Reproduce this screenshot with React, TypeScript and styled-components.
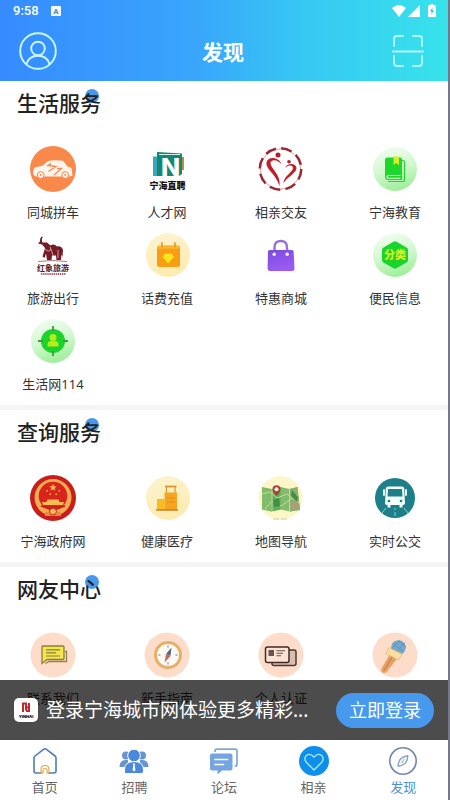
import React from "react";
import styled, { createGlobalStyle } from "styled-components";

const GlobalStyle = createGlobalStyle`
  *, *::before, *::after { box-sizing: border-box; }
  body {
    margin: 0;
    background: #fff;
    color: #333;
    font-family: "Noto Sans", "Noto Sans CJK SC", sans-serif;
  }
  a { color: inherit; text-decoration: none; }
  button { font: inherit; color: inherit; border: 0; padding: 0; background: none; cursor: pointer; }
  h1, h2, p { margin: 0; }
  svg { display: block; }
`;

const Screen = styled.div`
  display: flex;
  flex-direction: column;
  height: 100vh;
  border-right: 2px solid #77778a;
  background: #fff;
`;

const Header = styled.header`
  flex: none;
  background: linear-gradient(90deg, #368bff 0%, #39a7fb 45%, #37c5f4 65%, #37e3eb 100%);
  color: #fff;
`;

const StatusBar = styled.div`
  display: flex;
  align-items: center;
  justify-content: space-between;
  height: 21px;
  padding: 0 12px 0 13px;
  font: 500 13px/20px Roboto, sans-serif;
`;

const StatusGroup = styled.div<{ $gap: number }>`
  display: flex;
  align-items: center;
  gap: ${(p) => p.$gap}px;
`;

const TitleBar = styled.div`
  display: grid;
  grid-template-columns: 40px 1fr 40px;
  align-items: center;
  height: 60px;
  padding: 0 20px 0 18px;
`;

const PageTitle = styled.h1`
  font: 700 21px/30px "Noto Sans CJK SC", sans-serif;
  text-align: center;
`;

const IconButton = styled.button`
  display: grid;
  place-items: center;
  width: 40px;
  height: 40px;
`;

const Body = styled.div`
  position: relative;
  flex: 1;
  min-height: 0;
`;

const Scroller = styled.main`
  height: 100%;
  overflow-y: auto;
  scrollbar-width: none;
  padding-bottom: 60px;
`;

const Section = styled.section`
  padding: 0 16px 11px;
  & + & { border-top: 5px solid #f5f5f6; }
`;

const SectionHead = styled.div`
  height: 65px;
  padding: 6px 0 0 1px;
`;

const SectionTitle = styled.h2`
  position: relative;
  z-index: 0;
  width: max-content;
  font: 500 21px/30px "Noto Sans CJK SC", sans-serif;
  color: #222;
  &::after {
    content: "";
    position: absolute;
    z-index: -1;
    top: 2px;
    right: 2px;
    width: 14px;
    height: 14px;
    border-radius: 50%;
    background: #4a98ea;
  }
`;

const ServiceGrid = styled.div`
  display: grid;
  grid-template-columns: repeat(4, 74px);
  justify-content: space-between;
  row-gap: 10px;
`;

const ServiceLink = styled.a`
  display: flex;
  flex-direction: column;
  align-items: center;
  gap: 10px;
  font-size: 13px;
  line-height: 20px;
  white-space: nowrap;
`;

const LoginBar = styled.aside`
  position: absolute;
  left: 0;
  right: 0;
  bottom: 0;
  display: flex;
  align-items: center;
  height: 60px;
  padding: 0 14px;
  background: rgba(0, 0, 0, 0.7);
  color: #fff;
`;

const AppLogo = styled.span`
  flex: none;
  width: 24px;
  height: 24px;
  margin-right: 8px;
  border-radius: 5px;
  background: #fff;
`;

const LoginText = styled.p`
  flex: 1;
  min-width: 0;
  font-size: 19px;
  line-height: 28px;
  white-space: nowrap;
`;

const LoginButton = styled.button`
  flex: none;
  width: 98px;
  height: 35px;
  border-radius: 18px;
  background: #4799ed;
  font-size: 18px;
  line-height: 35px;
  color: #fff;
`;

const TabBar = styled.nav`
  flex: none;
  display: grid;
  grid-template-columns: repeat(5, 1fr);
  height: 60px;
  padding-top: 6px;
  background: #fff;
`;

const Tab = styled.a<{ $active?: boolean }>`
  display: flex;
  flex-direction: column;
  align-items: center;
  gap: 2px;
  font-size: 13px;
  line-height: 18px;
  color: ${(p) => (p.$active ? "#4a90cf" : "#666")};
`;

const cjk = '"Noto Sans CJK SC", sans-serif';

const Art = ({ children }: { children: React.ReactNode }) => (
  <svg width="46" height="46" viewBox="0 0 46 46" fill="none" aria-hidden="true">
    {children}
  </svg>
);

const TabArt = ({ children }: { children: React.ReactNode }) => (
  <svg width="30" height="30" viewBox="0 0 30 30" fill="none" aria-hidden="true">
    {children}
  </svg>
);

const GreenDisc = ({ id }: { id: string }) => (
  <>
    <defs>
      <linearGradient id={id} x1="0.3" y1="0" x2="0.6" y2="1">
        <stop offset="0" stopColor="#f1fdf0" />
        <stop offset="0.5" stopColor="#d3f8d0" />
        <stop offset="1" stopColor="#9cee98" />
      </linearGradient>
    </defs>
    <circle cx="23" cy="23" r="22" fill={`url(#${id})`} />
  </>
);

const YellowDisc = ({ id }: { id: string }) => (
  <>
    <defs>
      <linearGradient id={id} x1="0.2" y1="0" x2="0.5" y2="1">
        <stop offset="0" stopColor="#fdf3cf" />
        <stop offset="1" stopColor="#fdebb0" />
      </linearGradient>
    </defs>
    <circle cx="24" cy="23" r="22" fill={`url(#${id})`} />
  </>
);

const CarArt = () => (
  <Art>
    <circle cx="23" cy="23" r="23" fill="#f9894a" />
    <path d="M3 25.5 4.500 21.500 13 19.500 18 15Q24 13.800 33 14.800L37.500 20.500 41.500 22 42.500 29.500 39.500 30.500H6L3.500 29Z" fill="#fff5ec" />
    <path d="M17 20 21 17.500 18.500 19.500 26 20.500 18.500 25.500" stroke="#f9894a" strokeWidth="1.300" />
    <path d="M24 29 31.500 22.500H27" stroke="#f9894a" strokeWidth="1.300" />
    <circle cx="10.700" cy="29" r="3.400" fill="#fff5ec" stroke="#f9894a" strokeWidth="1" />
    <circle cx="35.200" cy="29" r="3.400" fill="#fff5ec" stroke="#f9894a" strokeWidth="1" />
    <circle cx="10.700" cy="29" r="1" fill="#f9894a" />
    <circle cx="35.200" cy="29" r="1" fill="#f9894a" />
  </Art>
);

const JobsArt = () => (
  <Art>
    <path d="M9 10.500H14V30H9Z" fill="#35a9bb" />
    <path d="M36 11H40V24H36Z" fill="#b39245" />
    <path d="M13 6 38 7.500V28L35 30H13Z" fill="#188571" />
    <path d="M15 8.500H36" stroke="#d5eee8" strokeWidth="1" />
    <text x="26.500" y="29.500" textAnchor="middle" fontFamily="Inter, sans-serif" fontWeight="800" fontSize="25" fill="#fff">N</text>
    <text x="23.500" y="42.500" textAnchor="middle" fontFamily={cjk} fontWeight="900" fontSize="9" fill="#111">宁海直聘</text>
  </Art>
);

const DatingArt = () => (
  <Art>
    <circle cx="22.500" cy="23" r="20" stroke="#e0a0a4" strokeWidth="1" />
    <circle cx="22.500" cy="23" r="20.800" stroke="#9b2730" strokeWidth="2.400" strokeDasharray="11 5.340" />
    <circle cx="20" cy="9" r="2.500" fill="#b01f2a" />
    <circle cx="31" cy="15.800" r="1.800" fill="#b01f2a" />
    <path d="M23.500 18.500C21.500 11 10 9.500 8.500 16.500C7.500 23 18 28 21.500 40C23.500 29 12.500 22.500 12.500 17C13 12.500 20.500 13.500 23.500 18.500Z" fill="#c01e28" />
    <path d="M27 22C29 16.500 38 16.500 38.500 22C38.500 27.500 28.500 31 25.500 37.500C25.500 30 34.500 26.500 35 22C34.500 18.500 29.500 19 27 22Z" fill="#c01e28" />
  </Art>
);

const BookArt = () => (
  <Art>
    <GreenDisc id="disc-book" />
    <path d="M30 14.500H31Q32.500 14.500 32.500 16V34Q32.500 35.500 31 35.500H16" stroke="#1fd62d" strokeWidth="1.200" />
    <path d="M15.500 11.500H28Q30 11.500 30 13.500V34H16Q13 34 13 31V14Q13 11.500 15.500 11.500Z" fill="#1fd62d" />
    <path d="M28.500 29.500H16.500Q14.800 29.500 14.800 31Q14.800 32.300 16.500 32.300H28.500" stroke="#d9fbd5" strokeWidth="1.100" />
    <path d="M21.500 10.500H27V19L24.200 17 21.500 19Z" fill="#d8ee2c" />
  </Art>
);

const ElephantArt = () => (
  <Art>
    <path d="M12 4.500Q9.500 6 10 9.500L8 11.500 12 12.500 15 16 14 19.500 12.500 24.500 14.500 26 16 21.500 17 28H21.500L22 23.500H26L26.500 28H31L31.500 22.500 32.500 25 33 18Q31.500 13.500 27 14.500Q24 11 20.500 13.500L17 10.500 12.500 10.500Q11 7 13 5Z" fill="#741c25" />
    <path d="M15 17Q19 21 21 17M20 15 23 23M28 18V26" stroke="#fff" strokeWidth="0.600" />
    <path d="M8 29.500Q22 27.500 37 29.500" stroke="#8d5a5e" strokeWidth="0.800" />
    <text x="23" y="39" textAnchor="middle" fontFamily={cjk} fontWeight="700" fontSize="8" fill="#5c1a20">红象旅游</text>
    <path d="M11 42H36" stroke="#9a3038" strokeWidth="1.400" strokeDasharray="1.400 .700" />
  </Art>
);

const RechargeArt = () => (
  <Art>
    <YellowDisc id="disc-recharge" />
    <path d="M15.500 13.500H33.500Q36 13.500 36 16V32.500Q36 35 33.500 35H15.500Q13 35 13 32.500V16Q13 13.500 15.500 13.500Z" fill="#f79d16" />
    <path d="M14 15.500H35" stroke="#fdbd38" strokeWidth="2" />
    <path d="M18 11V15M31 11V15" stroke="#e3a139" strokeWidth="1.800" strokeLinecap="round" />
    <path d="M21 21.500H27.500L30 25 24.200 31.500 18.500 25Z" fill="#ffe41f" />
  </Art>
);

const BagArt = () => (
  <Art>
    <defs>
      <linearGradient id="bag" x1="0" y1="0" x2="0.300" y2="1">
        <stop offset="0" stopColor="#7b4be0" />
        <stop offset="1" stopColor="#9b5bf2" />
      </linearGradient>
    </defs>
    <path d="M16.500 21V15.500Q16.500 9 22.800 9T29 15.500V21" stroke="#9570d8" strokeWidth="2.400" />
    <path d="M11.500 18H34Q35.500 18 35.600 19.500L36.500 36.500Q36.500 39 34 39H12Q9.500 39 9.600 36.500L10 19.500Q10 18 11.500 18Z" fill="url(#bag)" />
    <circle cx="16.200" cy="22.300" r="1.800" fill="#f1e9ff" />
    <circle cx="29.200" cy="22.300" r="1.800" fill="#f1e9ff" />
  </Art>
);

const InfoArt = () => (
  <Art>
    <GreenDisc id="disc-info" />
    <path d="M21.500 9.700Q23 8.900 24.500 9.700L34.500 15.500Q36 16.400 36 18V28Q36 29.600 34.500 30.500L24.500 36.300Q23 37.100 21.500 36.300L11.500 30.500Q10 29.600 10 28V18Q10 16.400 11.500 15.500Z" fill="#19d42b" />
    <text x="23" y="27" textAnchor="middle" fontFamily={cjk} fontWeight="900" fontSize="11" fill="#d9ee25">分类</text>
  </Art>
);

const DirectoryArt = () => (
  <Art>
    <GreenDisc id="disc-directory" />
    <circle cx="23" cy="23" r="12" fill="#1bd32a" />
    <path d="M23 8V13M23 33V38M8 23H13M33 23H38" stroke="#3d9c3e" strokeWidth="1.800" />
    <circle cx="23" cy="19.500" r="3.500" fill="#b9ea1c" />
    <path d="M17.500 28.500V26.500Q17.500 23 21 23H25Q28.500 23 28.500 26.500V28.500Z" fill="#b9ea1c" />
  </Art>
);

const EmblemArt = () => (
  <Art>
    <circle cx="23" cy="23" r="23" fill="#c91d1c" />
    <circle cx="23" cy="22.500" r="18.500" fill="#f2ac52" />
    <circle cx="23" cy="21" r="14.300" fill="#d9241d" />
    <path d="M23 8.800 24 11.300 26.800 11.400 24.600 13.100 25.400 15.700 23 14.200 20.600 15.700 21.400 13.100 19.200 11.400 22 11.300Z" fill="#f8bb55" />
    <path d="M16.500 15h1.500v1.500h-1.500zM28.500 15h1.500v1.500h-1.500zM19.500 18.500h1.500v1.500h-1.500zM25.500 18.500h1.500v1.500h-1.500z" fill="#f8bb55" />
    <path d="M17.500 24.500H28.500L29.500 27H34L33 30H13L12 27H16.500Z" fill="#f8bb55" />
    <path d="M11 31Q23 36 35 31" stroke="#c91d1c" strokeWidth="1.500" />
    <circle cx="23" cy="36.500" r="3.500" fill="#f8bb55" stroke="#c91d1c" strokeWidth="1" />
    <path d="M14 38 19 36.500 20 41H15.500ZM32 38 27 36.500 26 41H30.500Z" fill="#e9873f" />
  </Art>
);

const HealthArt = () => (
  <Art>
    <YellowDisc id="disc-health" />
    <path d="M21 11.500H32.500" stroke="#d99531" strokeWidth="1.800" />
    <path d="M22.500 12V18M31 12V18" stroke="#d99531" strokeWidth="1.200" />
    <path d="M20.500 17.500H33V35H20.500Z" fill="#f7a421" />
    <path d="M13 24H20.500V35H13Z" fill="#fbbb1d" />
    <path d="M23 23H31M23 27H31" stroke="#dd8618" strokeWidth="0.800" />
    <path d="M12 35H34" stroke="#c58123" strokeWidth="1.500" />
  </Art>
);

const MapArt = () => (
  <Art>
    <circle cx="22.500" cy="23" r="22" fill="#fdf6c9" />
    <path d="M4 12 14 14 22.500 12 31.500 14 39.500 12 42 35 32 36.500 22.500 34.500 13 36.500 4 34.500Z" fill="#82bc6b" />
    <path d="M14 14 22.500 12V34.500L13 36.500Z" fill="#5fae58" />
    <path d="M31.500 14 39.500 12 42 35 32 36.500Z" fill="#8fae73" />
    <path d="M4 19 12 17 19 23 29 19 41 28M7 34 14 26 23 31 33 24 41 19M14 14V36M31.500 14V36" stroke="#bddb9e" strokeWidth="1" />
    <path d="M34 15 40 22 39 27 33 21ZM15 25 21 23 22 31 16 32Z" fill="#438f45" />
    <path d="M33 29 38 27 40 32 34 34Z" fill="#b89a75" />
    <path d="M18.500 21Q14.500 17 14.500 14.200A4 4 0 0 1 22.500 14.200Q22.500 17 18.500 21Z" fill="#a84536" />
    <circle cx="18.500" cy="14.200" r="2" fill="#fff3e6" />
    <path d="M15 44H29" stroke="#c9c4a0" strokeWidth="0.800" strokeDasharray="6 2" />
  </Art>
);

const BusArt = () => (
  <Art>
    <circle cx="23" cy="23" r="20" fill="#1d7f87" />
    <path d="M16 11.500H30Q32 11.500 32.200 13.500L33 28Q33 30 31 30H15Q13 30 13 28L13.800 13.500Q14 11.500 16 11.500Z" fill="#f4ffff" />
    <path d="M16 14H30L30.500 21.500H15.500Z" fill="#1d7f87" />
    <path d="M12 15V20M34 15V20" stroke="#d9f5f5" strokeWidth="2" strokeLinecap="round" />
    <path d="M15.500 30H18.500V32.500H15.500ZM27.500 30H30.500V32.500H27.500Z" fill="#f4ffff" />
    <circle cx="17" cy="26" r="1.300" fill="#1d7f87" />
    <circle cx="29" cy="26" r="1.300" fill="#1d7f87" />
    <path d="M14 33 10 38M32 33 36 38M23 33V35M23 37V41" stroke="#8fd0d2" strokeWidth="1" />
  </Art>
);

const PeachDisc = () => <circle cx="23" cy="23" r="22.500" fill="#fddcc9" />;

const ContactArt = () => (
  <Art>
    <PeachDisc />
    <path d="M35 19.500H36.500V29.500H19L15.500 31.500" stroke="#8f8350" strokeWidth="1.300" />
    <path d="M12.500 14H33Q34 14 34 15V26.500Q34 27.500 33 27.500H17L12 31.500V15Q12 14 12.500 14Z" fill="#f3e552" stroke="#8c8033" strokeWidth="1.300" />
    <path d="M16 17.800H30M16 20.800H26M16 24H30" stroke="#8c8033" strokeWidth="1.200" />
  </Art>
);

const GuideArt = () => (
  <Art>
    <PeachDisc />
    <circle cx="24" cy="23" r="12.500" fill="#fffaf5" stroke="#e5b06a" strokeWidth="3" />
    <path d="M24 13.500V15.500M24 30.500V32.500M14.500 23H16.500M31.500 23H33.500" stroke="#6e6e78" strokeWidth="1" />
    <path d="M27.500 15.500 26.500 24 22 22Z" fill="#556888" />
    <path d="M20.500 30.500 22 22 26.500 24Z" fill="#c96557" />
  </Art>
);

const CertArt = () => (
  <Art>
    <PeachDisc />
    <rect x="14" y="18" width="24" height="15.500" rx="2" fill="#d8bdb0" stroke="#4d382f" strokeWidth="1.500" />
    <rect x="7.500" y="15" width="23.500" height="15.500" rx="2" fill="#fbe2d4" stroke="#3f2c25" strokeWidth="1.500" />
    <rect x="10.500" y="18" width="5.500" height="6" fill="#6a554c" />
    <path d="M18.500 18.800H27M18.500 21.300H25M18.500 23.800H23" stroke="#6a554c" strokeWidth="1.100" />
  </Art>
);

const MicArt = () => (
  <Art>
    <PeachDisc />
    <path d="M17.500 23 24.500 27.500 14.500 40Q12.500 42 10.500 40.500T9.500 36.500Z" fill="#e7a263" />
    <path d="M20 25.500 12 38.500" stroke="#c57e45" strokeWidth="1.200" />
    <circle cx="26.500" cy="15.500" r="7.300" fill="#76a9ce" />
    <path d="M21 11 32 20M26 8.500 33.500 14.500M32.500 11 23 21M28 8.500 19.800 17" stroke="#5688b5" strokeWidth="0.700" />
    <path d="M17 15.500 30 22 26.500 28 14 21.500Z" fill="#f8df9f" stroke="#d5ad68" strokeWidth="0.600" strokeLinejoin="round" />
  </Art>
);

const HomeArt = () => (
  <TabArt>
    <path d="M6 27Q4 27 4 25V12Q4 10.800 5 10L13.500 3.300Q15 2.200 16.500 3.300L25 10Q26 10.800 26 12V25Q26 27 24 27H19M11 27H6" stroke="#4b7db8" strokeWidth="1.600" strokeLinecap="round" />
    <path d="M11 27V23.500Q11 19.500 15 19.500T19 23.500V27H17V24Q17 22.500 15 22.500T13 24V27Z" stroke="#dfa33c" strokeWidth="1.100" strokeLinejoin="round" />
  </TabArt>
);

const RecruitArt = () => (
  <TabArt>
    <g fill="#6a94d0">
      <circle cx="7" cy="9.500" r="4" />
      <path d="M.500 21Q.500 14.500 6 14H9V21Z" />
      <circle cx="23" cy="9.500" r="4" />
      <path d="M29.500 21Q29.500 14.500 24 14H21V21Z" />
    </g>
    <circle cx="15" cy="9.500" r="6.300" fill="#4b89dc" stroke="#fff" strokeWidth="1" />
    <path d="M5.500 27.500V24Q5.500 15.500 15 15.500T24.500 24V25.500Q24.500 27.500 22.500 27.500Z" fill="#4b89dc" stroke="#fff" strokeWidth="1" />
    <path d="M13.800 17.500H16.200L15.700 19.500 16.500 24 15 25.500 13.500 24 14.300 19.500Z" fill="#fff" />
  </TabArt>
);

const ForumArt = () => (
  <TabArt>
    <path d="M6 6V5Q6 3.200 8 3.200H26Q28 3.200 28 5V18Q28 20 26 20H25.500" stroke="#7ea8da" strokeWidth="1.700" />
    <path d="M3 7.500H21.500Q23.500 7.500 23.500 9.500V22.500Q23.500 24.500 21.500 24.500H13L8.500 28.500V24.500H3Q1 24.500 1 22.500V9.500Q1 7.500 3 7.500Z" fill="#74a5e0" />
    <path d="M6 13.500H18.500M6 18.500H14.500" stroke="#fff" strokeWidth="1.700" strokeLinecap="round" />
  </TabArt>
);

const HeartArt = () => (
  <TabArt>
    <circle cx="15" cy="15" r="15" fill="#0f8fe9" />
    <path d="M15 24 7.500 16.500Q4.500 13 7 9.800Q10.500 6.500 15 11Q19.500 6.500 23 9.800Q25.500 13 22.500 16.500Z" stroke="#a8f0ff" strokeWidth="1.300" strokeLinejoin="round" />
  </TabArt>
);

const DiscoverArt = () => (
  <TabArt>
    <circle cx="15" cy="15" r="13.200" stroke="#7386b5" strokeWidth="1.600" />
    <path d="M19.800 9.800Q20 13.500 17.500 17Q14 19.800 10.200 20.200Q10 16.500 12.500 13Q16 10.200 19.800 9.800Z" stroke="#88a2c4" strokeWidth="1.400" strokeLinejoin="round" />
    <path d="M16.200 13 13.800 17" stroke="#88a2c4" strokeWidth="1" />
  </TabArt>
);

type Entry = { label?: string; name?: string; Icon: React.ComponentType };

const sections: { title: string; items: Entry[] }[] = [
  {
    title: "生活服务",
    items: [
      { label: "同城拼车", Icon: CarArt },
      { label: "人才网", Icon: JobsArt },
      { label: "相亲交友", Icon: DatingArt },
      { label: "宁海教育", Icon: BookArt },
      { label: "旅游出行", Icon: ElephantArt },
      { label: "话费充值", Icon: RechargeArt },
      { label: "特惠商城", Icon: BagArt },
      { label: "便民信息", Icon: InfoArt },
      { label: "生活网114", Icon: DirectoryArt },
    ],
  },
  {
    title: "查询服务",
    items: [
      { label: "宁海政府网", Icon: EmblemArt },
      { label: "健康医疗", Icon: HealthArt },
      { label: "地图导航", Icon: MapArt },
      { label: "实时公交", Icon: BusArt },
    ],
  },
  {
    title: "网友中心",
    items: [
      { label: "联系我们", Icon: ContactArt },
      { label: "新手指南", Icon: GuideArt },
      { label: "个人认证", Icon: CertArt },
      { name: "语音", Icon: MicArt },
    ],
  },
];

const tabs = [
  { label: "首页", Icon: HomeArt },
  { label: "招聘", Icon: RecruitArt },
  { label: "论坛", Icon: ForumArt },
  { label: "相亲", Icon: HeartArt },
  { label: "发现", Icon: DiscoverArt },
];

export default function App() {
  return (
    <>
      <GlobalStyle />
      <Screen>
        <Header>
          <StatusBar>
            <StatusGroup $gap={12}>
              <span>9:58</span>
              <svg width="10" height="10" viewBox="0 0 10 10" aria-hidden="true">
                <rect width="10" height="10" rx="1" fill="#f3faff" />
                <text x="5" y="8" textAnchor="middle" fontFamily="Roboto, sans-serif" fontWeight="700" fontSize="8" fill="#5b83b5">A</text>
              </svg>
            </StatusGroup>
            <StatusGroup $gap={2}>
              <svg width="14" height="12" viewBox="0 0 14 12" fill="#fff" aria-hidden="true">
                <path d="M0 3Q7-3 14 3L7 12Z" />
              </svg>
              <svg width="12" height="12" viewBox="0 0 12 12" fill="#fff" aria-hidden="true">
                <path d="M12 0V12H0Z" />
              </svg>
              <svg width="14" height="13" viewBox="0 0 14 13" fill="#fff" aria-hidden="true">
                <path d="M8.500 0H11.500V1H13Q14 1 14 2V12Q14 13 13 13H7Q6 13 6 12V2Q6 1 7 1H8.500Z" />
                <path d="M10.800 3 8 7.500H9.800L9.200 11 12 6.300H10.200Z" fill="#3fb8de" />
              </svg>
            </StatusGroup>
          </StatusBar>
          <TitleBar>
            <IconButton aria-label="个人中心">
              <svg width="38" height="38" viewBox="0 0 38 38" fill="none" stroke="#c9f7ff" strokeWidth="1.900" aria-hidden="true">
                <circle cx="19" cy="19" r="17.800" />
                <circle cx="19" cy="16.500" r="6.800" />
                <path d="M7.500 32Q10 23.800 19 23.800T30.500 32" />
              </svg>
            </IconButton>
            <PageTitle>发现</PageTitle>
            <IconButton aria-label="扫一扫">
              <svg width="32" height="34" viewBox="0 0 32 34" fill="none" stroke="#b4f8ff" strokeWidth="1.900" strokeLinecap="round" aria-hidden="true">
                <path d="M2 12V5Q2 2 5 2H11M21 2H27Q30 2 30 5V12M2 22V29Q2 32 5 32H11M21 32H27Q30 32 30 29V22M1 17.500H31" />
              </svg>
            </IconButton>
          </TitleBar>
        </Header>

        <Body>
          <Scroller>
            {sections.map(({ title, items }) => (
              <Section key={title}>
                <SectionHead>
                  <SectionTitle>{title}</SectionTitle>
                </SectionHead>
                <ServiceGrid>
                  {items.map(({ label, name, Icon }) => (
                    <ServiceLink key={label ?? name} href="#" aria-label={name}>
                      <Icon />
                      {label}
                    </ServiceLink>
                  ))}
                </ServiceGrid>
              </Section>
            ))}
          </Scroller>
          <LoginBar>
            <AppLogo>
              <svg width="24" height="24" viewBox="0 0 24 24" fill="none" aria-hidden="true">
                <path d="M9 14V5.500H12V12.500M15 5V14M12 9.500H15M12 13H15" stroke="#c5262b" strokeWidth="2" />
                <text x="12" y="19.500" textAnchor="middle" fontFamily="Inter, sans-serif" fontWeight="900" fontSize="4" fill="#111">YINHAI</text>
              </svg>
            </AppLogo>
            <LoginText>登录宁海城市网体验更多精彩...</LoginText>
            <LoginButton>立即登录</LoginButton>
          </LoginBar>
        </Body>

        <TabBar>
          {tabs.map(({ label, Icon }) => (
            <Tab key={label} href="#" $active={label === "发现"} aria-current={label === "发现" ? "page" : undefined}>
              <Icon />
              {label}
            </Tab>
          ))}
        </TabBar>
      </Screen>
    </>
  );
}
